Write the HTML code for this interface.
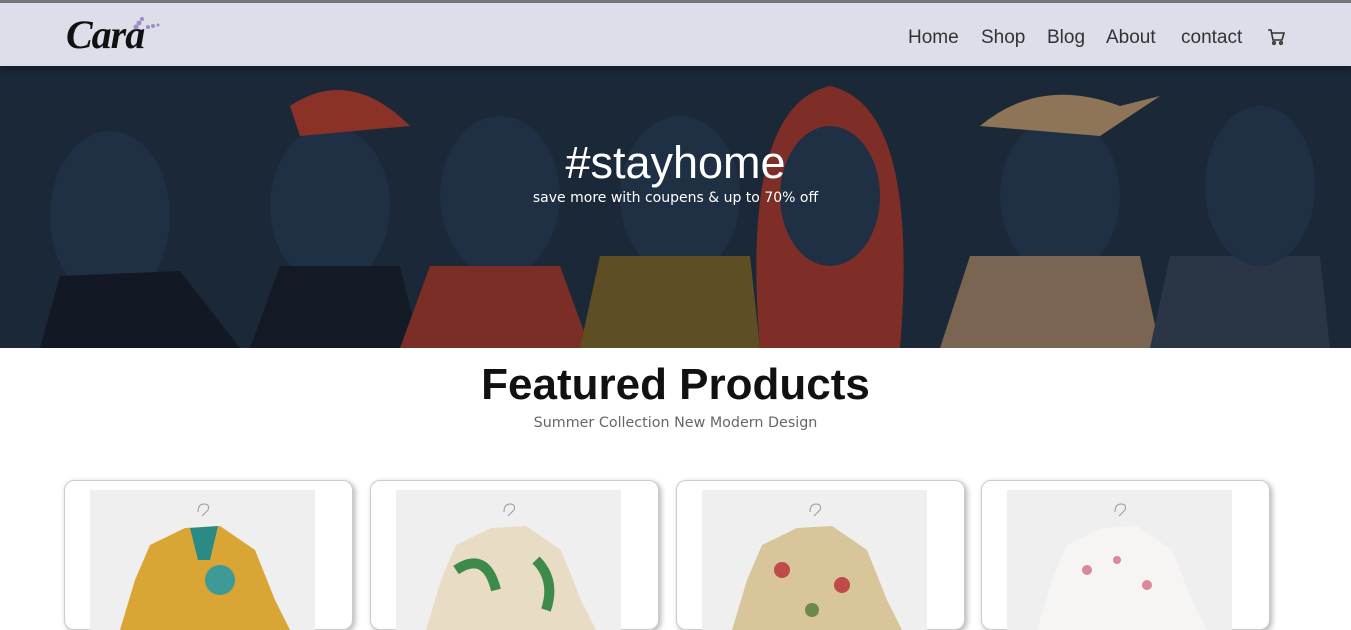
<!DOCTYPE html>
<html><head><meta charset="utf-8"><style>
*{margin:0;padding:0;box-sizing:border-box}
body{width:1351px;height:610px;overflow:hidden;background:#fff;font-family:"Liberation Sans",sans-serif;position:relative}
.hdr{position:absolute;left:0;top:0;width:1351px;height:66px;background:#dcdee9;border-top:3px solid #777;box-shadow:0 4px 6px rgba(0,0,0,.3);z-index:2}
.logo{position:absolute;left:66px;top:8px;font-family:"Liberation Serif",serif;font-style:italic;font-weight:bold;font-size:40px;color:#111;letter-spacing:-1px}
.nav{position:absolute;top:24px;font-size:19px;color:#333}
.hero{position:absolute;left:0;top:66px;width:1351px;height:282px;background:#1c2b3d;overflow:hidden}
.h1{position:absolute;left:0;width:1351px;top:137px;text-align:center;color:#fff;font-size:45px;font-family:"Liberation Sans",sans-serif}
.h2{position:absolute;left:0;width:1351px;top:190px;text-align:center;color:#fff;font-size:14px;font-family:"DejaVu Sans",sans-serif}
.fp{position:absolute;left:0;width:1351px;top:360px;text-align:center;font-weight:bold;font-size:44px;font-family:"Liberation Sans",sans-serif;color:#111}
.sub{position:absolute;left:0;width:1351px;top:415px;text-align:center;font-size:14.3px;color:#666;font-family:"DejaVu Sans",sans-serif}
.card{position:absolute;top:480px;width:289px;height:150px;border:1px solid #ccc;border-radius:10px;box-shadow:2px 2px 6px rgba(0,0,0,.3);background:#fff}
.img{position:absolute;left:25px;top:9px;width:225px;height:140px;background:#efefef;overflow:hidden}
</style></head><body>
<div class="hdr">
<div class="logo">Cara</div>
<svg style="position:absolute;left:128px;top:10px" width="36" height="30"><g fill="#a08ac8"><circle cx="14" cy="6" r="2"/><circle cx="11" cy="10" r="2.5"/><circle cx="8" cy="14" r="2.5"/><circle cx="20" cy="14" r="2"/><circle cx="25" cy="13" r="2"/><circle cx="30" cy="12" r="1.5"/></g></svg>
<span class="nav" style="left:908px">Home</span>
<span class="nav" style="left:981px">Shop</span>
<span class="nav" style="left:1047px">Blog</span>
<span class="nav" style="left:1106px">About</span>
<span class="nav" style="left:1181px">contact</span>
<svg style="position:absolute;left:1267px;top:25px" width="18" height="18" fill="none" stroke="#333" stroke-width="1.6"><path d="M1 2h3l2 10h9l2-7H5"/><circle cx="7" cy="15" r="1.3"/><circle cx="14" cy="15" r="1.3"/></svg>
</div>
<div class="hero">
<svg width="1351" height="282" style="position:absolute;left:0;top:0">
<rect width="1351" height="282" fill="#1b2838"/>
<ellipse cx="110" cy="150" rx="60" ry="85" fill="#1f3045"/>
<path d="M40 282 L60 210 L180 205 L240 282Z" fill="#131924"/>
<ellipse cx="330" cy="140" rx="60" ry="80" fill="#1f3045"/>
<path d="M290 40 Q350 0 410 60 L300 70Z" fill="#8a3228"/>
<path d="M250 282 L280 200 L400 200 L420 282Z" fill="#141a25"/>
<ellipse cx="500" cy="130" rx="60" ry="80" fill="#1f3045"/>
<path d="M400 282 L430 200 L560 200 L590 282Z" fill="#7a2e26"/>
<ellipse cx="680" cy="130" rx="60" ry="80" fill="#1f3045"/>
<path d="M580 282 L600 190 L750 190 L760 282Z" fill="#5e4e24"/>
<path d="M760 282 Q740 40 830 20 Q920 40 900 282Z" fill="#7e2e26"/>
<ellipse cx="830" cy="130" rx="50" ry="70" fill="#1f3045"/>
<ellipse cx="1060" cy="130" rx="60" ry="80" fill="#1f3045"/>
<path d="M980 60 Q1040 10 1120 40 L1160 30 L1100 70Z" fill="#8f7558"/>
<path d="M940 282 L970 190 L1140 190 L1160 282Z" fill="#7a6452"/>
<path d="M1150 282 L1170 190 L1320 190 L1330 282Z" fill="#2a3545"/>
<ellipse cx="1260" cy="120" rx="55" ry="80" fill="#1f3045"/>
</svg>
</div>
<div class="h1">#stayhome</div>
<div class="h2">save more with coupens &amp; up to 70% off</div>
<div class="fp">Featured Products</div>
<div class="sub">Summer Collection New Modern Design</div>
<div class="card" style="left:64px"><div class="img"><svg width="225" height="140"><path d="M108 22 q0-8 6-8 q6 0 4 6 l-6 6" fill="none" stroke="#999"/><path d="M95 38 L130 36 L165 60 L185 110 L200 140 L30 140 L45 90 L60 55Z" fill="#d9a534"/><path d="M100 38 L128 36 L120 70 L108 70Z" fill="#2a8a86"/><circle cx="130" cy="90" r="15" fill="#3d9a94"/></svg></div></div>
<div class="card" style="left:370px"><div class="img"><svg width="225" height="140"><path d="M108 22 q0-8 6-8 q6 0 4 6 l-6 6" fill="none" stroke="#999"/><path d="M95 38 L130 36 L165 60 L185 110 L200 140 L30 140 L45 90 L60 55Z" fill="#e9dcc4"/><path d="M60 80 Q90 60 100 100 M140 70 Q160 90 150 120" stroke="#3d8a4a" stroke-width="10" fill="none"/></svg></div></div>
<div class="card" style="left:676px"><div class="img"><svg width="225" height="140"><path d="M108 22 q0-8 6-8 q6 0 4 6 l-6 6" fill="none" stroke="#999"/><path d="M95 38 L130 36 L165 60 L185 110 L200 140 L30 140 L45 90 L60 55Z" fill="#d9c59a"/><circle cx="80" cy="80" r="8" fill="#c04a4a"/><circle cx="140" cy="95" r="8" fill="#c04a4a"/><circle cx="110" cy="120" r="7" fill="#6a8a4a"/></svg></div></div>
<div class="card" style="left:981px"><div class="img"><svg width="225" height="140"><path d="M108 22 q0-8 6-8 q6 0 4 6 l-6 6" fill="none" stroke="#999"/><path d="M95 38 L130 36 L165 60 L185 110 L200 140 L30 140 L45 90 L60 55Z" fill="#f7f4f4"/><circle cx="80" cy="80" r="5" fill="#d88a9a"/><circle cx="140" cy="95" r="5" fill="#d88a9a"/><circle cx="110" cy="70" r="4" fill="#d88a9a"/></svg></div></div>
</body></html>
